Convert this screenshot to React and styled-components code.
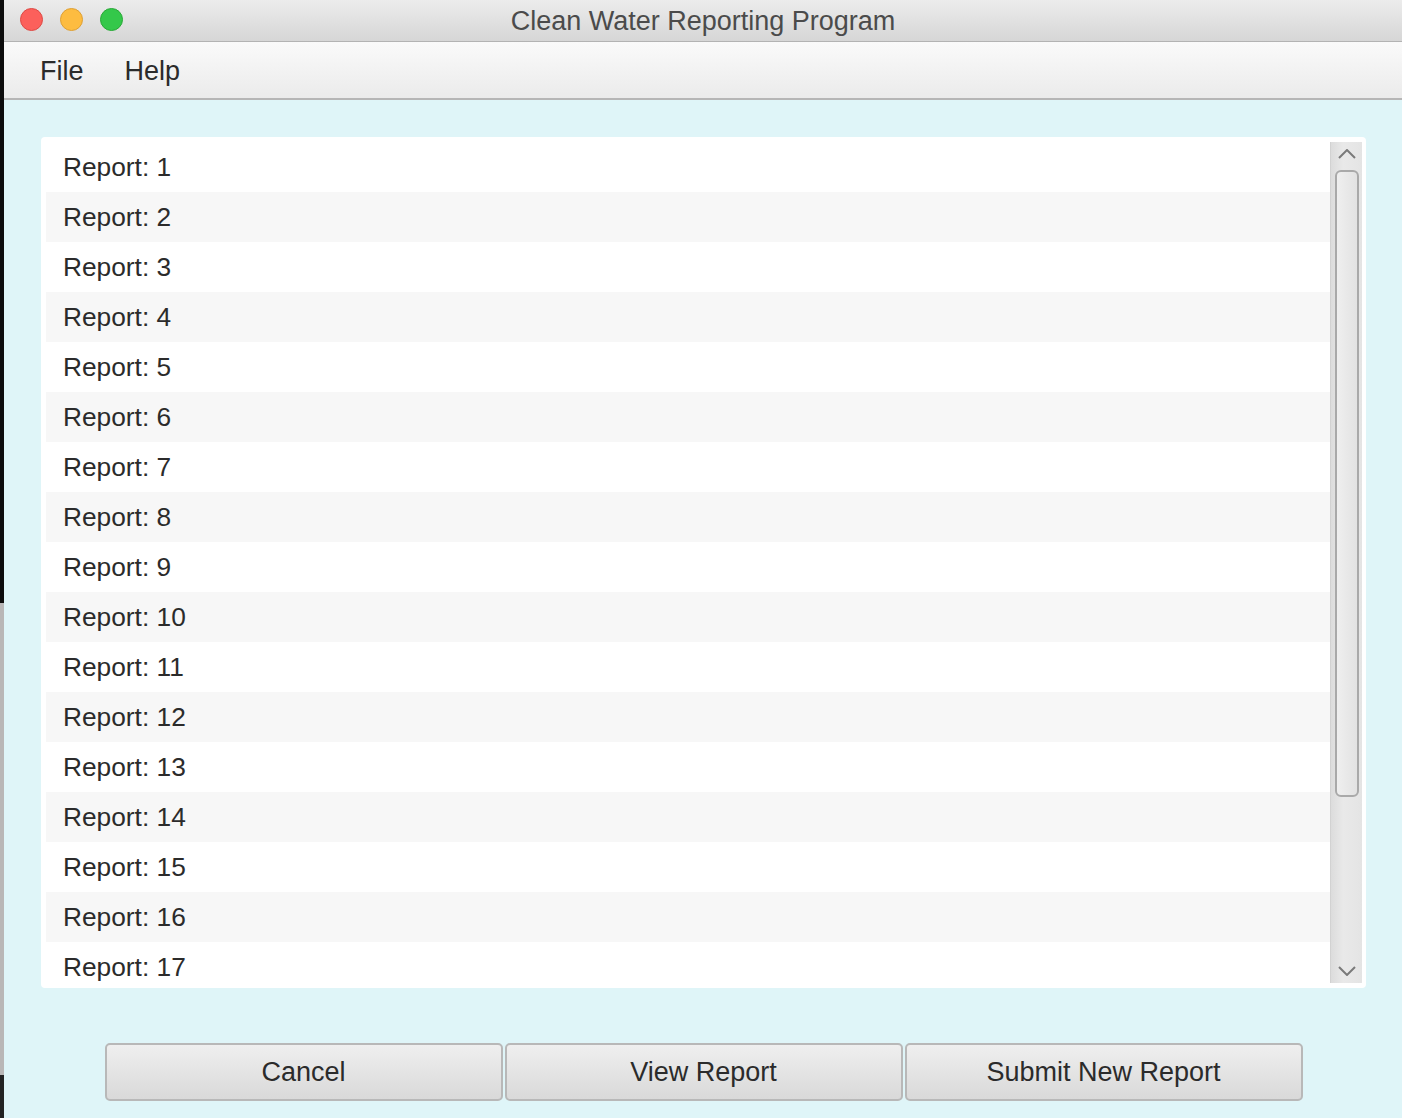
import styled, { createGlobalStyle } from 'styled-components';

const GlobalStyle = createGlobalStyle`
  html, body {
    margin: 0;
    padding: 0;
    overflow: hidden;
  }
  body {
    font-family: 'Liberation Sans', Arial, sans-serif;
    color: #2b2b2b;
  }
`;

const Screen = styled.div`
  display: flex;
  width: 1402px;
  height: 1118px;
  overflow: hidden;
`;

const Backdrop = styled.div`
  width: 4px;
  flex-shrink: 0;
  background: linear-gradient(
    to bottom,
    #0c0c0c 0px,
    #0c0c0c 603px,
    #b9b7b7 603px,
    #b9b7b7 1075px,
    #232323 1075px
  );
`;

const Window = styled.div`
  flex: 1;
  display: flex;
  flex-direction: column;
  background: #dff5f8;
`;

const TitleBar = styled.div`
  position: relative;
  height: 41px;
  display: flex;
  align-items: center;
  justify-content: center;
  background: linear-gradient(to bottom, #ececec, #d6d6d6);
  border-bottom: 1px solid #b3b3b3;
`;

const Lights = styled.div`
  position: absolute;
  left: 16px;
  top: 8px;
  display: flex;
  gap: 17px;
`;

const Light = styled.span`
  width: 21px;
  height: 21px;
  border-radius: 50%;
  background: ${({ fill }) => fill};
  border: 1px solid ${({ edge }) => edge};
`;

const Title = styled.div`
  font-size: 27px;
  color: #4b4b4b;
  padding-top: 2px;
`;

const MenuBar = styled.div`
  height: 58px;
  box-sizing: border-box;
  display: flex;
  align-items: center;
  gap: 41px;
  padding-left: 36px;
  padding-top: 2px;
  background: linear-gradient(to bottom, #fafafa, #ebebeb);
  border-bottom: 2px solid #b6b6b6;
`;

const MenuItem = styled.span`
  font-size: 27px;
  color: #2b2b2b;
`;

const Content = styled.div`
  flex: 1;
  display: flex;
  flex-direction: column;
  padding: 37px 36px 17px 37px;
`;

const ListBox = styled.div`
  height: 851px;
  box-sizing: border-box;
  display: flex;
  padding: 5px 4px 5px 5px;
  background: #ffffff;
  border-radius: 4px;
`;

const Rows = styled.div`
  flex: 1;
  overflow: hidden;
`;

const Row = styled.div`
  height: 50px;
  display: flex;
  align-items: center;
  padding-left: 17px;
  font-size: 26.3px;
  color: #2b2b2b;
  background: ${({ odd }) => (odd ? '#f7f7f7' : '#ffffff')};
`;

const ScrollBar = styled.div`
  width: 32px;
  display: flex;
  flex-direction: column;
  align-items: center;
  box-sizing: border-box;
  border-left: 1px solid #d2d2d2;
  background: linear-gradient(to right, #dcdcdc, #e9e9e9 40%, #e4e4e4);
`;

const Arrow = styled.div`
  height: 24px;
  display: flex;
  align-items: center;
  justify-content: center;
`;

const Thumb = styled.div`
  width: 24px;
  height: 627px;
  margin-top: 4px;
  box-sizing: border-box;
  border: 2px solid #a9a9a9;
  border-radius: 6px;
  background: linear-gradient(to right, #efefef, #e2e2e2);
`;

const Track = styled.div`
  flex: 1;
`;

const ButtonRow = styled.div`
  display: flex;
  justify-content: center;
  gap: 2px;
  margin-top: 55px;
`;

const Button = styled.button`
  width: 398px;
  height: 58px;
  font-family: 'Liberation Sans', Arial, sans-serif;
  font-size: 27px;
  color: #2b2b2b;
  background: linear-gradient(to bottom, #efefef, #d9d9d9);
  border: 2px solid #b8b8b8;
  border-radius: 5px;
  padding: 0;
`;

const Chevron = ({ up }) => (
  <svg width="18" height="10" viewBox="0 0 18 10">
    <path
      d={up ? 'M1 9 L9 1 L17 9' : 'M1 1 L9 9 L17 1'}
      fill="none"
      stroke="#7a7a7a"
      strokeWidth="2"
    />
  </svg>
);

const reports = Array.from({ length: 17 }, (_, i) => i + 1);

const App = () => {
  return (
    <Screen>
      <GlobalStyle />
      <Backdrop />
      <Window>
        <TitleBar>
          <Lights>
            <Light fill="#fc605b" edge="#de4a45" />
            <Light fill="#fdbc40" edge="#dea034" />
            <Light fill="#34c84a" edge="#28a936" />
          </Lights>
          <Title>Clean Water Reporting Program</Title>
        </TitleBar>
        <MenuBar>
          <MenuItem>File</MenuItem>
          <MenuItem>Help</MenuItem>
        </MenuBar>
        <Content>
          <ListBox>
            <Rows>
              {reports.map((n) => (
                <Row key={n} odd={n % 2 === 0}>
                  Report: {n}
                </Row>
              ))}
            </Rows>
            <ScrollBar>
              <Arrow>
                <Chevron up />
              </Arrow>
              <Thumb />
              <Track />
              <Arrow>
                <Chevron />
              </Arrow>
            </ScrollBar>
          </ListBox>
          <ButtonRow>
            <Button>Cancel</Button>
            <Button>View Report</Button>
            <Button>Submit New Report</Button>
          </ButtonRow>
        </Content>
      </Window>
    </Screen>
  );
};

export default App;
